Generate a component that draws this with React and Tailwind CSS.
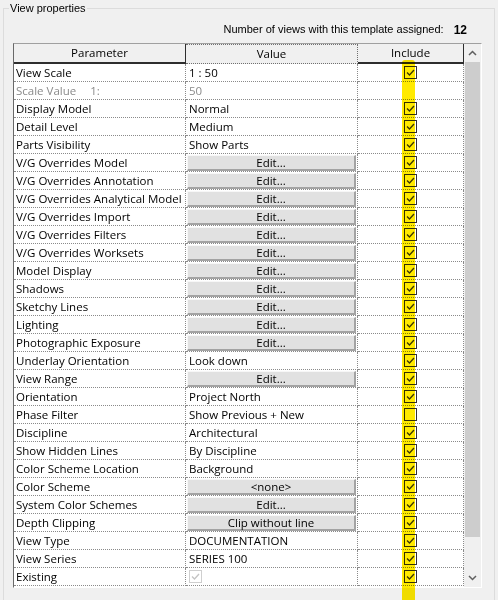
import React from "react";

const GRID_FONT = { fontFamily: '"Open Sans", "Noto Sans", "Liberation Sans", sans-serif' };
const FORM_FONT = { fontFamily: '"Liberation Sans", Arial, sans-serif' };

const rows = [
  { p: "View Scale", v: "1 : 50", c: true },
  { p: "Scale Value", suffix: "1:", v: "50", muted: true, c: null },
  { p: "Display Model", v: "Normal", c: true },
  { p: "Detail Level", v: "Medium", c: true },
  { p: "Parts Visibility", v: "Show Parts", c: true },
  { p: "V/G Overrides Model", b: "Edit...", c: true },
  { p: "V/G Overrides Annotation", b: "Edit...", c: true },
  { p: "V/G Overrides Analytical Model", b: "Edit...", c: true },
  { p: "V/G Overrides Import", b: "Edit...", c: true },
  { p: "V/G Overrides Filters", b: "Edit...", c: true },
  { p: "V/G Overrides Worksets", b: "Edit...", c: true },
  { p: "Model Display", b: "Edit...", c: true },
  { p: "Shadows", b: "Edit...", c: true },
  { p: "Sketchy Lines", b: "Edit...", c: true },
  { p: "Lighting", b: "Edit...", c: true },
  { p: "Photographic Exposure", b: "Edit...", c: true },
  { p: "Underlay Orientation", v: "Look down", c: true },
  { p: "View Range", b: "Edit...", c: true },
  { p: "Orientation", v: "Project North", c: true },
  { p: "Phase Filter", v: "Show Previous + New", c: false },
  { p: "Discipline", v: "Architectural", c: true },
  { p: "Show Hidden Lines", v: "By Discipline", c: true },
  { p: "Color Scheme Location", v: "Background", c: true },
  { p: "Color Scheme", b: "<none>", c: true },
  { p: "System Color Schemes", b: "Edit...", c: true },
  { p: "Depth Clipping", b: "Clip without line", c: true },
  { p: "View Type", v: "DOCUMENTATION", c: true },
  { p: "View Series", v: "SERIES 100", c: true },
  { p: "Existing", valueCheck: true, c: true },
];

function CheckBox({ checked, disabled }) {
  return (
    <div
      className={
        "w-[13px] h-[13px] border flex items-center justify-center " +
        (disabled ? "border-[#cfcfcf] bg-white" : "border-[#333333] bg-white")
      }
    >
      {checked && (
        <svg width="11" height="11" viewBox="0 0 11 11">
          <polyline
            points="2,5.5 4.5,8 9,3"
            fill="none"
            stroke={disabled ? "#c4c4c4" : "#3a3a3a"}
            strokeWidth="1.3"
          />
        </svg>
      )}
    </div>
  );
}

function Row({ r }) {
  const cell = "h-full border-b border-r border-dotted border-[#8a8a8a] flex items-center";
  return (
    <div className="flex h-[18px]">
      <div className={cell + " w-[172px] pl-[2px] " + (r.muted ? "text-[#8a8a8a]" : "text-black")}>
        <span>{r.p}</span>
        {r.suffix && <span className="ml-[14px]">{r.suffix}</span>}
      </div>
      <div className={cell + " w-[172px] " + (r.muted ? "text-[#8a8a8a]" : "text-black")}>
        {r.b ? (
          <div className="mx-[1px] mt-[1px] h-[16px] w-full bg-[#e1e1e1] border-t border-l border-[#f7f7f7] border-b-2 border-r-2 border-b-[#a3a3a3] border-r-[#a3a3a3] flex items-center justify-center">
            {r.b}
          </div>
        ) : r.valueCheck ? (
          <div className="pl-[3px]">
            <CheckBox checked disabled />
          </div>
        ) : (
          <span className="pl-[3px]">{r.v}</span>
        )}
      </div>
      <div className={cell + " flex-1 justify-center"}>
        {r.c !== null && <CheckBox checked={r.c} />}
      </div>
    </div>
  );
}

function Chevron({ up }) {
  return (
    <svg width="9" height="6" viewBox="0 0 9 6">
      <polyline
        points={up ? "1,5 4.5,1.5 8,5" : "1,1 4.5,4.5 8,1"}
        fill="none"
        stroke="#606060"
        strokeWidth="1.5"
      />
    </svg>
  );
}

export default function App() {
  return (
    <div className="relative w-[498px] h-[600px] overflow-hidden bg-[#f0f0f0] text-black">
      <fieldset className="ml-[3px] w-[492px] h-[640px] border border-[#dcdcdc] pt-0">
        <legend className="ml-[5px] px-[1px] leading-[16px] text-[11px]" style={FORM_FONT}>
          View properties
        </legend>

        <div className="h-[27px] flex items-center justify-end pr-[27px] text-[11px]" style={FORM_FONT}>
          <span>Number of views with this template assigned:</span>
          <span className="ml-[10px] font-bold text-[12px]">12</span>
        </div>

        <div
          className="ml-[9px] w-[469px] h-[545px] border-t border-l border-t-[#a0a0a0] border-l-[#696969] border-b border-r border-b-white border-r-white flex text-[11.5px]"
          style={GRID_FONT}
        >
          <div className="w-[450px] flex flex-col bg-white">
            <div className="flex h-[20px] bg-[#f0f0f0]">
              <div className="w-[172px] h-full border-r border-b-2 border-[#2e2e2e] flex items-center justify-center">
                Parameter
              </div>
              <div className="w-[172px] h-full border-t border-r border-dotted border-[#707070] flex items-center justify-center border-b">
                Value
              </div>
              <div className="flex-1 h-full border-r border-b-2 border-[#2e2e2e] flex items-center justify-center">
                Include
              </div>
            </div>
            {rows.map((r, i) => (
              <Row key={i} r={r} />
            ))}
          </div>

          <div className="flex-1 flex flex-col bg-[#f0f0f0]">
            <div className="h-[18px] flex items-center justify-center">
              <Chevron up />
            </div>
            <div className="mx-[1px] h-[475px] bg-[#cdcdcd]" />
            <div className="flex-1" />
            <div className="h-[18px] flex items-center justify-center">
              <Chevron />
            </div>
          </div>
        </div>
      </fieldset>

      {/* highlighter stroke down the Include column */}
      <div className="absolute left-[402px] top-[60px] w-[13px] h-[545px] bg-[#ffea00] mix-blend-multiply rounded-t-[3px]" />
    </div>
  );
}
